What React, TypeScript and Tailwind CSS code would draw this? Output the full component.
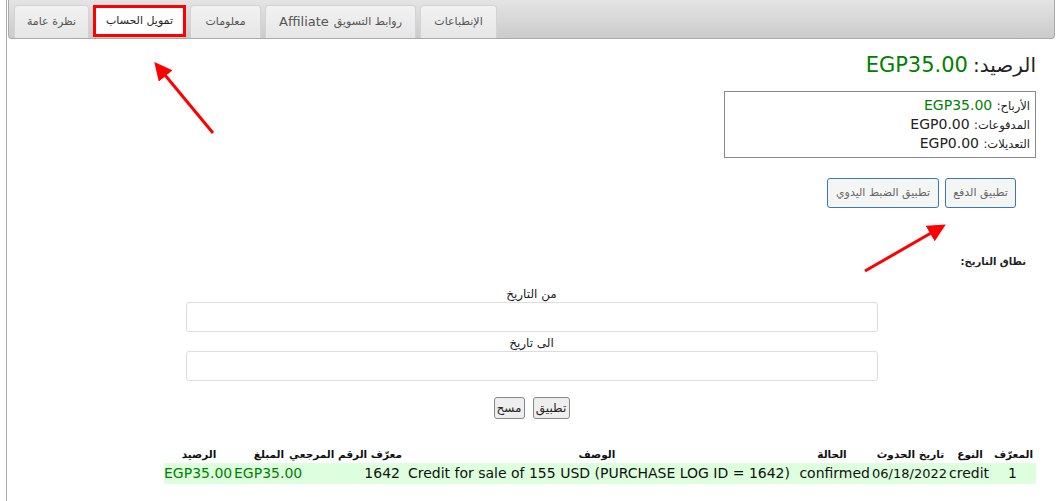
import React from 'react';

const font = { fontFamily: '"DejaVu Sans", Verdana, sans-serif' };

const tabs = [
  { label: 'نظرة عامة', w: 'w-[75px]' },
  { label: 'تمويل الحساب', w: 'w-[93px]', active: true },
  { label: 'معلومات', w: 'w-[71px]' },
  { label: 'روابط التسويق', extra: 'Affiliate', w: 'w-[151px]' },
  { label: 'الإنطباعات', w: 'w-[77px]' },
];

function TabBar() {
  return (
    <div className="h-[39px] mx-px rounded-b-[4px] border border-t-0 border-[#aaaaaa] bg-gradient-to-b from-[#e4e4e4] to-[#cbcbcb] flex items-end gap-[4px] pl-[5px]">
      {tabs.map((t) =>
        t.active ? (
          <div
            key={t.label}
            dir="rtl"
            className={`${t.w} h-[32px] mb-px bg-white border-[3px] border-[#ff0000] flex items-center justify-center text-[11px] text-[#222]`}
          >
            {t.label}
          </div>
        ) : (
          <div
            key={t.label}
            dir="rtl"
            className={`${t.w} h-[33px] rounded-t-[4px] border border-b-0 border-[#d3d3d3] bg-gradient-to-b from-[#f2f2f2] to-[#e6e6e6] flex items-center justify-center gap-[5px] text-[11px] text-[#555]`}
          >
            <span>{t.label}</span>
            {t.extra && <span className="text-[13px]">{t.extra}</span>}
          </div>
        )
      )}
    </div>
  );
}

function Arrows() {
  return (
    <svg className="absolute inset-0 pointer-events-none" width="1056" height="501">
      <defs>
        <marker id="ah" markerWidth="6" markerHeight="6" refX="3" refY="3" orient="auto" markerUnits="strokeWidth">
          <path d="M0,0 L6,3 L0,6 Z" fill="#ff0000" />
        </marker>
      </defs>
      <line x1="213" y1="133" x2="160" y2="69" stroke="#ff0000" strokeWidth="3" markerEnd="url(#ah)" />
      <line x1="865" y1="271" x2="938" y2="229" stroke="#ff0000" strokeWidth="3" markerEnd="url(#ah)" />
    </svg>
  );
}

const cols = [
  { h: 'المعرّف', w: 'w-[45px]' },
  { h: 'النوع', w: 'w-[42px]' },
  { h: 'تاريخ الحدوث', w: 'w-[77px]' },
  { h: 'الحالة', w: 'w-[80px]' },
  { h: 'الوصف', w: 'w-[390px]' },
  { h: 'معرّف الرقم المرجعي', w: 'w-[98px]' },
  { h: 'المبلغ', w: 'w-[70px]' },
  { h: 'الرصيد', w: 'w-[70px]' },
];

const row = ['1', 'credit', '06/18/2022', 'confirmed', 'Credit for sale of 155 USD (PURCHASE LOG ID = 1642)', '1642', 'EGP35.00', 'EGP35.00'];

export default function App() {
  return (
    <div className="relative w-[1056px] h-[501px] bg-white overflow-hidden" style={font}>
      <div className="ml-[6px] h-full border-l border-[#aaaaaa]">
        <TabBar />
        <div dir="rtl" className="pr-[20px] text-[#222]">
          <div className="pt-[12px] leading-[28px]">
            <span className="text-[20px]">الرصيد:</span>{' '}
            <span className="text-[21px] text-[#008000]">EGP35.00</span>
          </div>
          <div className="mt-[10px] w-[312px] border border-[#888] px-[5px] py-[4px] text-[14px]">
            <div className="h-[19px] leading-[19px]">
              <span className="text-[11.5px]">الأرباح:</span> <span className="text-[#008000]">EGP35.00</span>
            </div>
            <div className="h-[19px] leading-[19px]">
              <span className="text-[11.5px]">المدفوعات:</span> EGP0.00
            </div>
            <div className="h-[19px] leading-[19px]">
              <span className="text-[11.5px]">التعديلات:</span> EGP0.00
            </div>
          </div>
          <div className="mt-[20px] mr-[20px] flex gap-[6px]">
            <button className="h-[30px] w-[71px] rounded-[3px] border border-[#3a77b5] bg-[#f4f6f6] text-[11px] text-[#666]">
              تطبيق الدفع
            </button>
            <button className="h-[30px] w-[112px] rounded-[3px] border border-[#3a77b5] bg-[#f4f6f6] text-[11px] text-[#666]">
              تطبيق الضبط اليدوي
            </button>
          </div>
          <div className="mt-[46px] mr-[10px] text-[10px] font-bold leading-[16px]">نطاق التاريخ:</div>
        </div>
        <div dir="rtl" className="mt-[16px] flex flex-col items-center text-[12px] text-[#222]">
          <div className="leading-[16px]">من التاريخ</div>
          <input className="w-[692px] h-[30px] rounded-[3px] border border-[#dddddd] bg-white" />
          <div className="mt-[3px] leading-[16px]">الى تاريخ</div>
          <input className="w-[692px] h-[30px] rounded-[3px] border border-[#dddddd] bg-white" />
          <div className="mt-[16px] flex gap-[8px]">
            <button className="h-[22px] w-[37px] rounded-[3px] border border-[#888] bg-[#eeeeee] text-[12px]">تطبيق</button>
            <button className="h-[22px] w-[31px] rounded-[3px] border border-[#888] bg-[#eeeeee] text-[12px]">مسح</button>
          </div>
        </div>
        <div dir="rtl" className="mt-[26px] pr-[20px]">
          <table className="table-fixed w-[872px] border-collapse text-[#111]">
            <thead>
              <tr>
                {cols.map((c) => (
                  <th key={c.h} className={`${c.w} p-0 text-center text-[10.5px] font-bold leading-[18px] whitespace-nowrap`}>
                    {c.h}
                  </th>
                ))}
              </tr>
            </thead>
            <tbody>
              <tr className="bg-[#ddffdd]">
                {row.map((v, i) => (
                  <td
                    key={i}
                    dir="ltr"
                    className={`p-0 pr-[2px] leading-[21px] whitespace-nowrap ${i === 2 ? 'text-[13px]' : 'text-[14px]'} ${i === 0 ? 'text-center' : 'text-right'} ${i >= 6 ? 'text-[#008000]' : ''}`}
                  >
                    {v}
                  </td>
                ))}
              </tr>
            </tbody>
          </table>
        </div>
      </div>
      <Arrows />
    </div>
  );
}
